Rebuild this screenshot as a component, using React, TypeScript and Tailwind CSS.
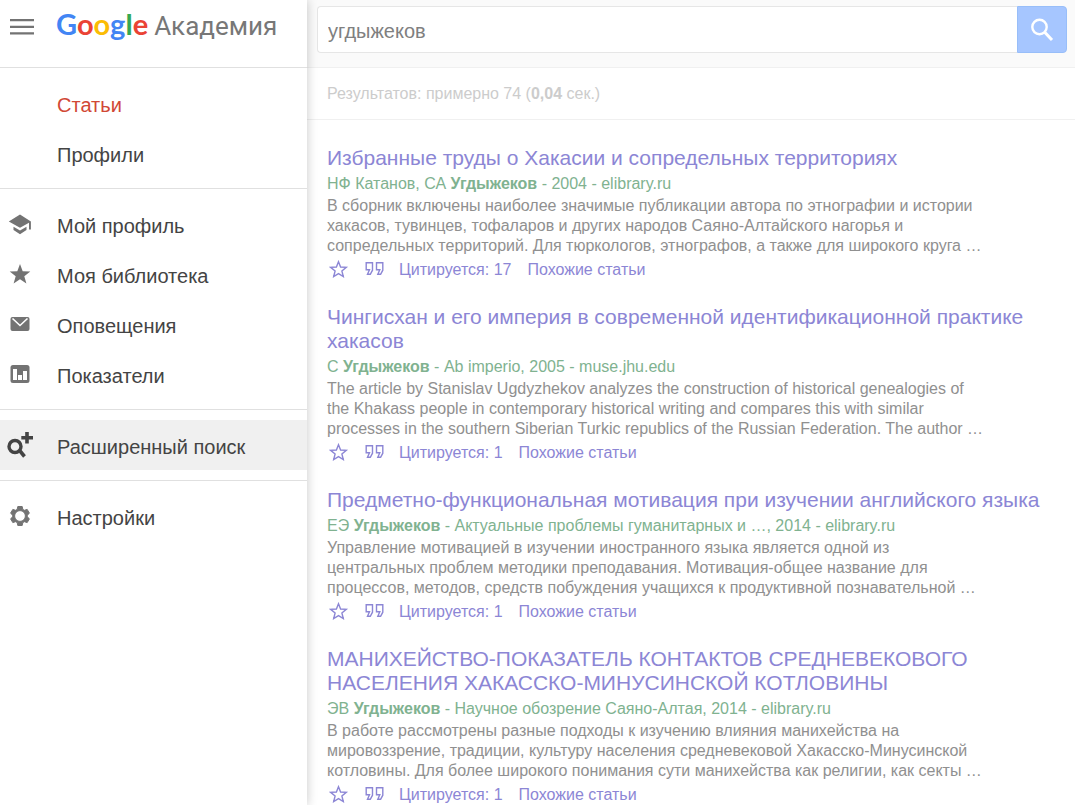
import type { ReactNode } from "react";

type Result = {
  title: string[];
  authors: string;
  source: string;
  snippet: string[];
  cited: number;
};

const results: Result[] = [
  {
    title: ["Избранные труды о Хакасии и сопредельных территориях"],
    authors: "НФ Катанов, СА",
    source: "2004 - elibrary.ru",
    snippet: [
      "В сборник включены наиболее значимые публикации автора по этнографии и истории",
      "хакасов, тувинцев, тофаларов и других народов Саяно-Алтайского нагорья и",
      "сопредельных территорий. Для тюркологов, этнографов, а также для широкого круга …",
    ],
    cited: 17,
  },
  {
    title: ["Чингисхан и его империя в современной идентификационной практике", "хакасов"],
    authors: "С",
    source: "Ab imperio, 2005 - muse.jhu.edu",
    snippet: [
      "The article by Stanislav Ugdyzhekov analyzes the construction of historical genealogies of",
      "the Khakass people in contemporary historical writing and compares this with similar",
      "processes in the southern Siberian Turkic republics of the Russian Federation. The author …",
    ],
    cited: 1,
  },
  {
    title: ["Предметно-функциональная мотивация при изучении английского языка"],
    authors: "ЕЭ",
    source: "Актуальные проблемы гуманитарных и …, 2014 - elibrary.ru",
    snippet: [
      "Управление мотивацией в изучении иностранного языка является одной из",
      "центральных проблем методики преподавания. Мотивация-общее название для",
      "процессов, методов, средств побуждения учащихся к продуктивной познавательной …",
    ],
    cited: 1,
  },
  {
    title: ["МАНИХЕЙСТВО-ПОКАЗАТЕЛЬ КОНТАКТОВ СРЕДНЕВЕКОВОГО", "НАСЕЛЕНИЯ ХАКАССКО-МИНУСИНСКОЙ КОТЛОВИНЫ"],
    authors: "ЭВ",
    source: "Научное обозрение Саяно-Алтая, 2014 - elibrary.ru",
    snippet: [
      "В работе рассмотрены разные подходы к изучению влияния манихейства на",
      "мировоззрение, традиции, культуру населения средневековой Хакасско-Минусинской",
      "котловины. Для более широкого понимания сути манихейства как религии, как секты …",
    ],
    cited: 1,
  },
];

function Lines({ lines }: { lines: string[] }) {
  return (
    <>
      {lines.map((line) => (
        <span key={line} className="block">
          {line}
        </span>
      ))}
    </>
  );
}

const capIcon = (
  <svg viewBox="0 0 24 22" className="h-[22px] w-6" fill="#737373">
    <path d="M12 1.500 0.800 8.500 12 14.800l9-5V16.500h1.900V8.500z" />
    <path d="M5.500 13.800v3.200l6.500 4.300 6.500-4.300v-3.200L12 17.600z" />
  </svg>
);
const starIcon = (
  <svg viewBox="0 0 22 20" className="h-5 w-[22px]" fill="#737373">
    <path d="m11 0 2.700 7.200 7.600.3-6 4.700 2.100 7.300L11 15.300l-6.400 4.200 2.100-7.300-6-4.700 7.600-.3z" />
  </svg>
);
const mailIcon = (
  <svg viewBox="0 0 20 16" className="h-4 w-5" fill="none">
    <rect x="0.500" y="1" width="19" height="14" rx="2" fill="#737373" />
    <path d="m2.500 2.500 7.500 7 7.500-7" stroke="#fff" strokeWidth="1.600" />
  </svg>
);
const chartIcon = (
  <svg viewBox="0 0 20 20" className="h-5 w-5">
    <rect x="0.500" y="1" width="19" height="18" rx="2.500" fill="#737373" />
    <path d="M3 5h4v11H3zM8 11h4v5H8zM13 7h4v9h-4z" fill="#fff" />
  </svg>
);
const advancedIcon = (
  <svg viewBox="0 0 28 28" className="h-7 w-7" fill="none" stroke="#444">
    <circle cx="9" cy="15.500" r="6" strokeWidth="3.400" />
    <path d="m14 20 4.500 5.500" strokeWidth="3.600" />
    <path d="M21 1v11.500M15.300 6.800H27" strokeWidth="3.600" />
  </svg>
);
const gearIcon = (
  <svg viewBox="1 1 22 22" className="h-[22px] w-[22px]" fill="#737373">
    <path
      fillRule="evenodd"
      strokeLinejoin="round"
      stroke="#737373"
      strokeWidth="1"
      d="M9.800 2.500h4.400l.6 2.900 1.600.9 2.800-.9 2.200 3.800-2.100 2v1.600l2.100 2-2.200 3.800-2.800-.9-1.600.9-.6 2.900H9.800l-.6-2.900-1.600-.9-2.800.9-2.200-3.800 2.100-2v-1.600l-2.100-2 2.200-3.800 2.800.9 1.600-.9zM12 6.600a5.400 5.400 0 1 0 0 10.800 5.400 5.400 0 0 0 0-10.800z"
    />
  </svg>
);

function NavItem({
  children,
  icon,
  className = "text-[#444]",
}: {
  children: ReactNode;
  icon?: ReactNode;
  className?: string;
}) {
  return (
    <li>
      <a href="#" className={`flex h-[50px] items-center text-xl ${className}`}>
        <span className="flex w-10 shrink-0 items-center justify-center">{icon}</span>
        <span className="ml-[17px] pt-1">{children}</span>
      </a>
    </li>
  );
}

function ResultItem({ result }: { result: Result }) {
  return (
    <article className="mb-6 last:mb-0">
      <h3 className="text-[21px] leading-6">
        <a href="#" className="text-[#8c86d5]">
          <Lines lines={result.title} />
        </a>
      </h3>
      <p className="mt-1 leading-5 text-[#80b290]">
        {result.authors} <b>Угдыжеков</b> - {result.source}
      </p>
      <p className="mt-0.5 leading-5 text-[#909090]">
        <Lines lines={result.snippet} />
      </p>
      <div className="mt-[3px] flex items-center leading-[22px] text-[#8c86d5]">
        <button type="button" aria-label="Сохранить" className="ml-0.5">
          <svg viewBox="0 0 20 20" className="h-5 w-5" fill="none" stroke="#8c86d5" strokeWidth="1.400">
            <path d="m9.500 1.700 2.100 5.300 5.700.4-4.400 3.600 1.400 5.600-4.800-3-4.800 3 1.400-5.600-4.400-3.600 5.700-.4z" />
          </svg>
        </button>
        <button type="button" aria-label="Цитировать" className="ml-4">
          <svg viewBox="0 0 20 20" className="h-5 w-5" fill="none" stroke="#8c86d5" strokeWidth="1.400">
            <path d="M1.200 2.700h6.300v7.500l-2.200 4.100H2.500l2-4.600H1.200zM11.500 2.700h6.300v7.500l-2.200 4.100h-2.800l2-4.600h-3.300z" />
          </svg>
        </button>
        <a href="#" className="ml-3.5">
          Цитируется: {result.cited}
        </a>
        <a href="#" className="ml-4">
          Похожие статьи
        </a>
      </div>
    </article>
  );
}

export default function App() {
  return (
    <div className="flex min-h-screen bg-white font-['Liberation_Sans',Arial,sans-serif] text-base">
      <aside className="relative z-10 w-[307px] shrink-0 bg-white shadow-[0_0_10px_rgba(0,0,0,0.22)]">
        <header className="flex h-[68px] items-start border-b border-[#e0e0e0]">
          <button type="button" aria-label="Меню" className="mt-[18px] ml-2.5">
            <svg viewBox="0 0 24 18" className="h-[18px] w-6" fill="#737373">
              <path d="M0 1h24v2.300H0zM0 7.800h24v2.300H0zM0 14.300h24v2.300H0z" />
            </svg>
          </button>
          <a href="#" className="ml-[22px] flex items-baseline pt-1 leading-10 whitespace-nowrap">
            <span className="font-['Lato',sans-serif] text-[29px] font-bold">
              <span className="text-[#4285f4]">G</span>
              <span className="text-[#ea4335]">o</span>
              <span className="text-[#fbbc05]">o</span>
              <span className="text-[#4285f4]">g</span>
              <span className="text-[#34a853]">l</span>
              <span className="text-[#ea4335]">e</span>
            </span>
            <span className="ml-1.5 font-['Roboto',sans-serif] text-[26px] text-[#777]">Академия</span>
          </a>
        </header>
        <nav className="divide-y divide-[#e0e0e0]">
          <ul className="py-2.5">
            <NavItem className="text-[#d14836]">Статьи</NavItem>
            <NavItem>Профили</NavItem>
          </ul>
          <ul className="py-2.5">
            <NavItem icon={capIcon}>Мой профиль</NavItem>
            <NavItem icon={starIcon}>Моя библиотека</NavItem>
            <NavItem icon={mailIcon}>Оповещения</NavItem>
            <NavItem icon={chartIcon}>Показатели</NavItem>
          </ul>
          <ul className="py-2.5">
            <NavItem icon={advancedIcon} className="bg-[#f0f0f0] text-[#444]">
              Расширенный поиск
            </NavItem>
          </ul>
          <ul className="py-2.5">
            <NavItem icon={gearIcon}>Настройки</NavItem>
          </ul>
        </nav>
      </aside>
      <div className="min-w-0 flex-1">
        <form
          role="search"
          onSubmit={(event) => event.preventDefault()}
          className="flex h-[68px] items-start border-b border-[#f0f0f0] bg-[#fafafa] px-2 pt-1.5 pl-2.5"
        >
          <input
            type="text"
            aria-label="Поиск"
            defaultValue="угдыжеков"
            className="h-[47px] min-w-0 flex-1 rounded-l-sm border border-r-0 border-[#e6e6e6] bg-white px-2.5 pt-1 text-xl text-[#808080] outline-none"
          />
          <button
            type="submit"
            aria-label="Найти"
            className="flex h-[47px] w-[50px] items-center justify-center rounded-r-sm border border-[#98bef9] bg-[#a6c6ff]"
          >
            <svg viewBox="0 0 24 24" className="h-6 w-6" fill="none" stroke="#fff">
              <circle cx="9.500" cy="9" r="7.200" strokeWidth="2.400" />
              <path d="m14.500 14 7.500 8" strokeWidth="3" />
            </svg>
          </button>
        </form>
        <p className="flex h-[52px] items-center border-b border-[#f0f0f0] pl-5 whitespace-pre text-[#ccc]">
          Результатов: примерно 74 (<b>0,04</b> сек.)
        </p>
        <main className="pt-[26px] pl-5">
          {results.map((result) => (
            <ResultItem key={result.title[0]} result={result} />
          ))}
        </main>
      </div>
    </div>
  );
}
